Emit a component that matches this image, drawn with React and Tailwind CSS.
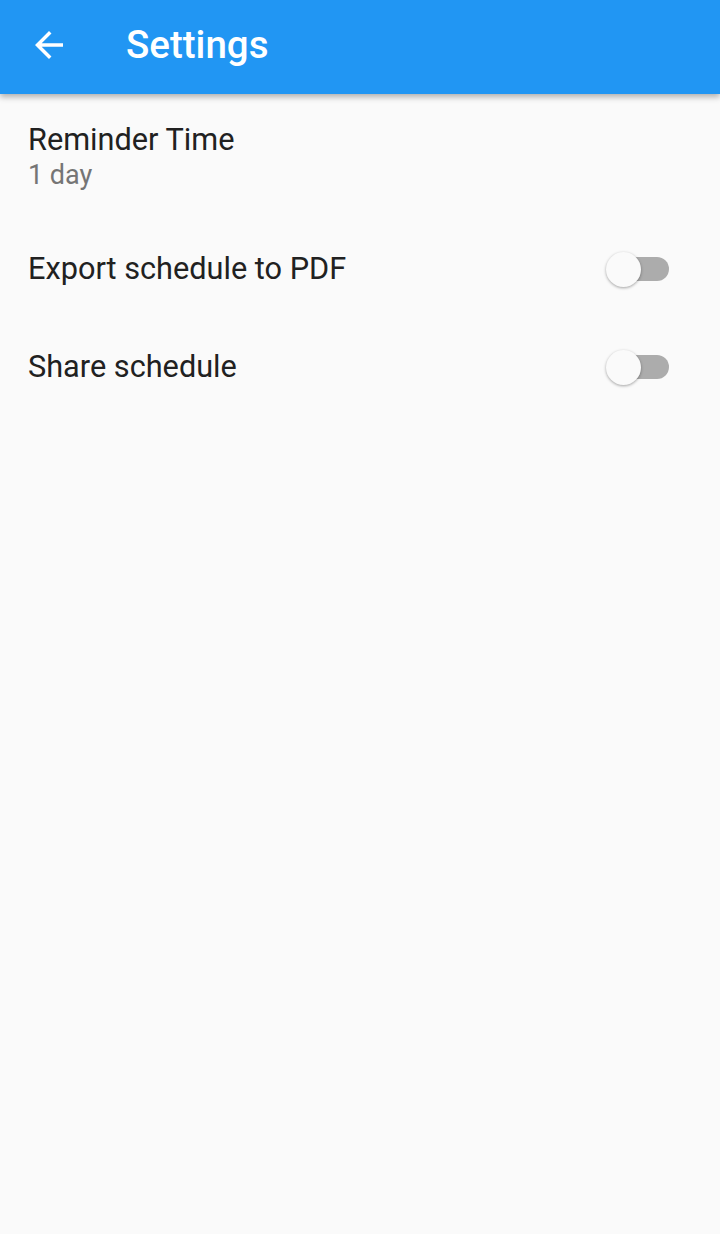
import { MdArrowBack } from 'react-icons/md';

const Toggle = () => (
  <div className="relative mr-[23px] h-[24px] w-[58px] rounded-full bg-[#acacac]">
    <div className="absolute left-[-5px] top-[-5.5px] h-[35px] w-[35px] rounded-full bg-[#fafafa] shadow-[0_1px_3px_rgba(0,0,0,0.35)]" />
  </div>
);

const SwitchRow = ({ label }) => (
  <div className="flex h-[98px] items-center justify-between px-[28px]">
    <span className="text-[30.7px] leading-[36px] text-[#212121]">{label}</span>
    <Toggle />
  </div>
);

export default function App() {
  return (
    <div className="min-h-[1234px] bg-[#fafafa]" style={{ fontFamily: 'Roboto, "Noto Sans", sans-serif' }}>
      {/* App bar */}
      <div className="relative z-10 flex h-[94px] items-center bg-[#2196f3] pb-[4px] shadow-[0_3px_6px_rgba(0,0,0,0.3)]">
        <div className="flex w-[98px] items-center justify-center">
          <MdArrowBack className="text-white" size={42} />
        </div>
        <h1 className="ml-[28px] text-[38.5px] font-medium leading-none text-white">Settings</h1>
      </div>

      {/* Reminder */}
      <div className="flex h-[126px] flex-col justify-center px-[28px]">
        <span className="text-[30.7px] leading-[36px] text-[#212121]">Reminder Time</span>
        <span className="text-[27px] leading-[34px] text-[#757575]">1 day</span>
      </div>

      <SwitchRow label="Export schedule to PDF" />
      <SwitchRow label="Share schedule" />
    </div>
  );
}
